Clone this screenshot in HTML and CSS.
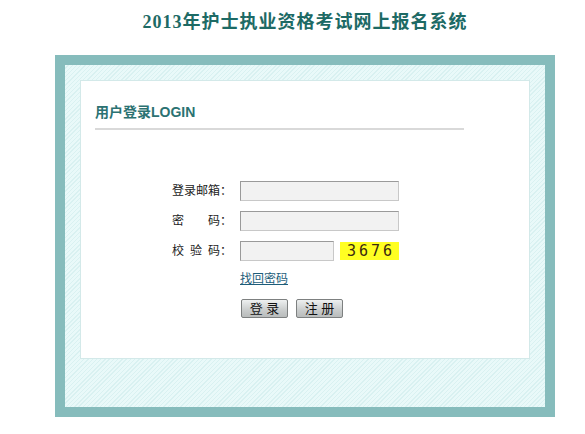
FILE: index.html
```html
<!DOCTYPE html>
<html lang="zh-CN">
<head>
<meta charset="utf-8">
<title>2013年护士执业资格考试网上报名系统</title>
<link rel="stylesheet" href="styles.css">
</head>
<body>
<div class="page">
  <h1 class="title">2013年护士执业资格考试网上报名系统</h1>
  <div class="frame">
    <div class="panel">
      <h2 class="panel-title">用户登录LOGIN</h2>
      <div class="form">
        <div class="row">
          <span class="label">登录邮箱：</span>
          <span class="input"></span>
        </div>
        <div class="row">
          <span class="label label-spread"><span>密</span><span>码：</span></span>
          <span class="input"></span>
        </div>
        <div class="row">
          <span class="label label-spread3"><span>校</span><span>验</span><span>码：</span></span>
          <span class="input input-short"></span>
          <span class="captcha">3676</span>
        </div>
        <div class="row-link">
          <a class="link" href="#">找回密码</a>
        </div>
        <div class="row-buttons">
          <span class="btn">登 录</span>
          <span class="btn">注 册</span>
        </div>
      </div>
    </div>
  </div>
</div>
</body>
</html>
```
FILE: styles.css
```css
html, body {
  margin: 0;
  padding: 0;
  background: #fff;
}
body {
  font-family: "Liberation Sans", "Noto Sans CJK SC", sans-serif;
  font-size: 12px;
  color: #222;
}
.page {
  width: 500px;
  margin-left: 55px;
}
.title {
  margin: 0;
  height: 55px;
  padding-top: 10px;
  box-sizing: border-box;
  text-align: center;
  font-family: "Liberation Serif", "Noto Sans CJK SC", serif;
  font-size: 18px;
  line-height: 24px;
  font-weight: bold;
  letter-spacing: 1px;
  color: #1d6a65;
}
.frame {
  border: 10px solid #86bcbc;
  padding: 15px 15px 47px 15px;
  background-color: #e9f9f9;
  background-image: repeating-linear-gradient(135deg, #e9f9f9 0, #e9f9f9 2px, #d9f1f1 2px, #d9f1f1 3px);
  box-sizing: border-box;
  height: 362px;
}
.panel {
  background: #fff;
  border: 1px solid #d3e9e9;
  height: 279px;
  box-sizing: border-box;
  padding: 17px 0 0 14px;
}
.panel-title {
  margin: 0;
  width: 369px;
  height: 32px;
  box-sizing: border-box;
  border-bottom: 2px solid #d9d9d9;
  font-size: 14px;
  line-height: 28px;
  font-weight: bold;
  color: #2b7272;
}
.form {
  padding-top: 51px;
  padding-left: 77px;
}
.row {
  display: flex;
  align-items: center;
  height: 20px;
  margin-bottom: 10px;
}
.label {
  width: 60px;
  margin-right: 8px;
  color: #222;
  line-height: 20px;
  white-space: nowrap;
}
.label-spread {
  display: flex;
  justify-content: space-between;
}
.label-spread3 {
  display: flex;
  justify-content: space-between;
}
.input {
  display: block;
  width: 159px;
  height: 20px;
  box-sizing: border-box;
  border: 1px solid #9a9a9a;
  border-right-color: #c8c8c8;
  border-bottom-color: #c8c8c8;
  background: #f2f2f2;
}
.input-short {
  width: 94px;
}
.captcha {
  display: block;
  margin-left: 6px;
  width: 59px;
  height: 18px;
  background: #ffff22;
  font-family: "DejaVu Sans Mono", monospace;
  font-size: 15px;
  line-height: 18px;
  letter-spacing: 3px;
  text-indent: 3px;
  text-align: center;
  color: #3a2a10;
}
.row-link {
  padding-left: 68px;
  margin-top: 1px;
  height: 22px;
  line-height: 16px;
}
.link {
  color: #1d5d7a;
  text-decoration: underline;
  font-size: 12px;
}
.row-buttons {
  padding-left: 69px;
  display: flex;
  gap: 8px;
  margin-top: 6px;
}
.btn {
  display: block;
  width: 47px;
  height: 19px;
  box-sizing: border-box;
  border: 1px solid #7d8080;
  border-radius: 2px;
  background: linear-gradient(#eef0f0, #c9cccc 60%, #b9bcbc);
  text-align: center;
  line-height: 17px;
  font-size: 13px;
  color: #111;
}
```
